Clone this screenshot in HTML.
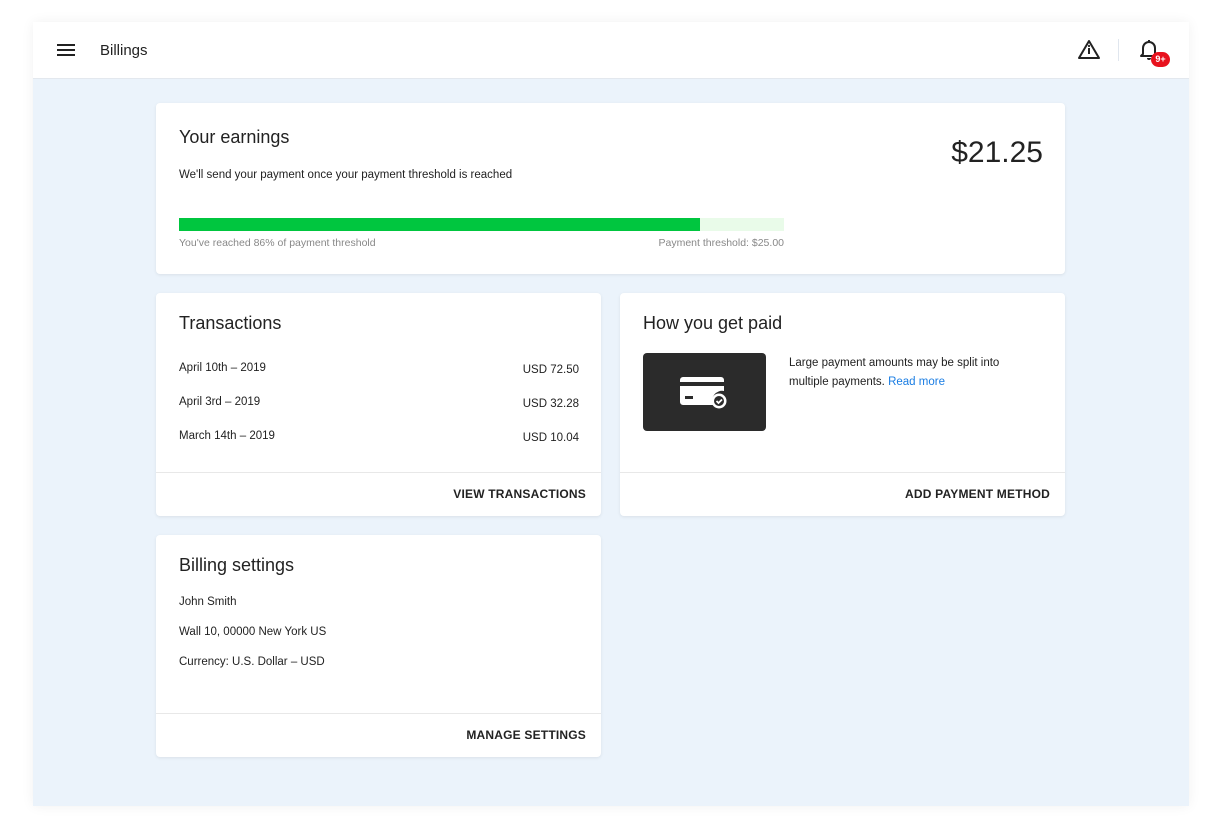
<!DOCTYPE html>
<html><head><style>
*{box-sizing:border-box;margin:0;padding:0}
body{width:1221px;height:829px;background:#fff;font-family:"Liberation Sans",sans-serif;color:#222;position:relative;overflow:hidden}
.frame{position:absolute;left:33px;top:22px;width:1156px;height:784px;background:#ebf3fb;box-shadow:0 0 12px rgba(0,0,0,.06)}
.hdr{position:absolute;left:0;top:0;width:1156px;height:57px;background:#fff;border-bottom:1px solid #e3e8ee}
.card{position:absolute;background:#fff;border-radius:4px;box-shadow:0 1px 3px rgba(0,0,0,.08)}
.t{position:absolute;font-size:18px;color:#222}
.s{position:absolute;font-size:11.5px;color:#222}
.foot{position:absolute;left:0;right:0;bottom:0;height:44px;border-top:1px solid #e8e8e8;font-size:12px;font-weight:bold;text-align:right;padding:14px 15px 0 0;letter-spacing:.2px}
</style></head><body>
<div class="frame">
<div class="hdr">
<div style="position:absolute;left:24px;top:22px;width:18px;height:2px;background:#222;box-shadow:0 5px 0 #222,0 10px 0 #222"></div>
<div style="position:absolute;left:67px;top:20px;font-size:15px">Billings</div>
<svg style="position:absolute;left:1044px;top:17px" width="24" height="22" viewBox="0 0 24 22"><path d="M12 2 L22 19 H2 Z" fill="none" stroke="#222" stroke-width="2" stroke-linejoin="round"/><rect x="11" y="9" width="2" height="6" fill="#222"/><circle cx="12" cy="7" r="1.1" fill="#222"/></svg>
<div style="position:absolute;left:1085px;top:17px;width:1px;height:22px;background:#e0e6ee"></div>
<svg style="position:absolute;left:1106px;top:17px" width="20" height="22" viewBox="0 0 20 22"><path d="M4 15 V9 a6 6 0 0 1 12 0 V15 L18 17 H2 Z" fill="none" stroke="#222" stroke-width="2" stroke-linejoin="round"/><path d="M8 19 a2 2 0 0 0 4 0" fill="#222"/><rect x="9" y="1" width="2" height="3" fill="#222"/></svg>
<div style="position:absolute;left:1118px;top:30px;width:19px;height:15px;border-radius:8px;background:#e8121e;color:#fff;font-size:9px;font-weight:bold;text-align:center;line-height:15px">9+</div>
</div>
</div>
<div class="card" style="left:156px;top:103px;width:909px;height:171px">
<div class="t" style="left:23px;top:24px">Your earnings</div>
<div class="s" style="left:23px;top:66px">We'll send your payment once your payment threshold is reached</div>
<div style="position:absolute;right:22px;top:33px;font-size:30px;color:#222">$21.25</div>
<div style="position:absolute;left:23px;top:115px;width:605px;height:13px;background:#e9fbe9"><div style="width:521px;height:13px;background:#00c63f"></div></div>
<div style="position:absolute;left:23px;top:134px;font-size:10.5px;color:#888">You've reached 86% of payment threshold</div>
<div style="position:absolute;right:281px;top:134px;font-size:10.5px;color:#888">Payment threshold: $25.00</div>
</div>
<div class="card" style="left:156px;top:293px;width:445px;height:223px">
<div class="t" style="left:23px;top:20px">Transactions</div>
<div class="s" style="left:23px;top:69px">April 10th – 2019</div><div class="s" style="right:22px;top:71px">USD 72.50</div>
<div class="s" style="left:23px;top:103px">April 3rd – 2019</div><div class="s" style="right:22px;top:105px">USD 32.28</div>
<div class="s" style="left:23px;top:137px">March 14th – 2019</div><div class="s" style="right:22px;top:139px">USD 10.04</div>
<div class="foot">VIEW TRANSACTIONS</div>
</div>
<div class="card" style="left:620px;top:293px;width:445px;height:223px">
<div class="t" style="left:23px;top:20px">How you get paid</div>
<div style="position:absolute;left:23px;top:60px;width:123px;height:78px;background:#2b2b2b;border-radius:4px">
<svg style="position:absolute;left:36px;top:21px" width="52" height="36" viewBox="0 0 52 36"><path d="M4 3 H42 a3 3 0 0 1 3 3 V8 H1 V6 a3 3 0 0 1 3-3Z" fill="#fff"/><path d="M1 12 H45 V17 a10 10 0 0 0 -11 14 H4 a3 3 0 0 1 -3-3Z" fill="#fff"/><rect x="6" y="22" width="8" height="3" fill="#2b2b2b"/><circle cx="40" cy="27" r="7.5" fill="#fff"/><circle cx="40" cy="27" r="5" fill="#2b2b2b"/><path d="M37.5 27 l2 2 l3.5-3.5" fill="none" stroke="#fff" stroke-width="1.8"/></svg>
</div>
<div class="s" style="left:169px;top:61px;line-height:19px;width:240px">Large payment amounts may be split into multiple payments. <span style="color:#1a7de3">Read more</span></div>
<div class="foot">ADD PAYMENT METHOD</div>
</div>
<div class="card" style="left:156px;top:535px;width:445px;height:222px">
<div class="t" style="left:23px;top:20px">Billing settings</div>
<div class="s" style="left:23px;top:61px">John Smith</div>
<div class="s" style="left:23px;top:91px">Wall 10, 00000 New York US</div>
<div class="s" style="left:23px;top:121px">Currency: U.S. Dollar – USD</div>
<div class="foot">MANAGE SETTINGS</div>
</div>
</body></html>
